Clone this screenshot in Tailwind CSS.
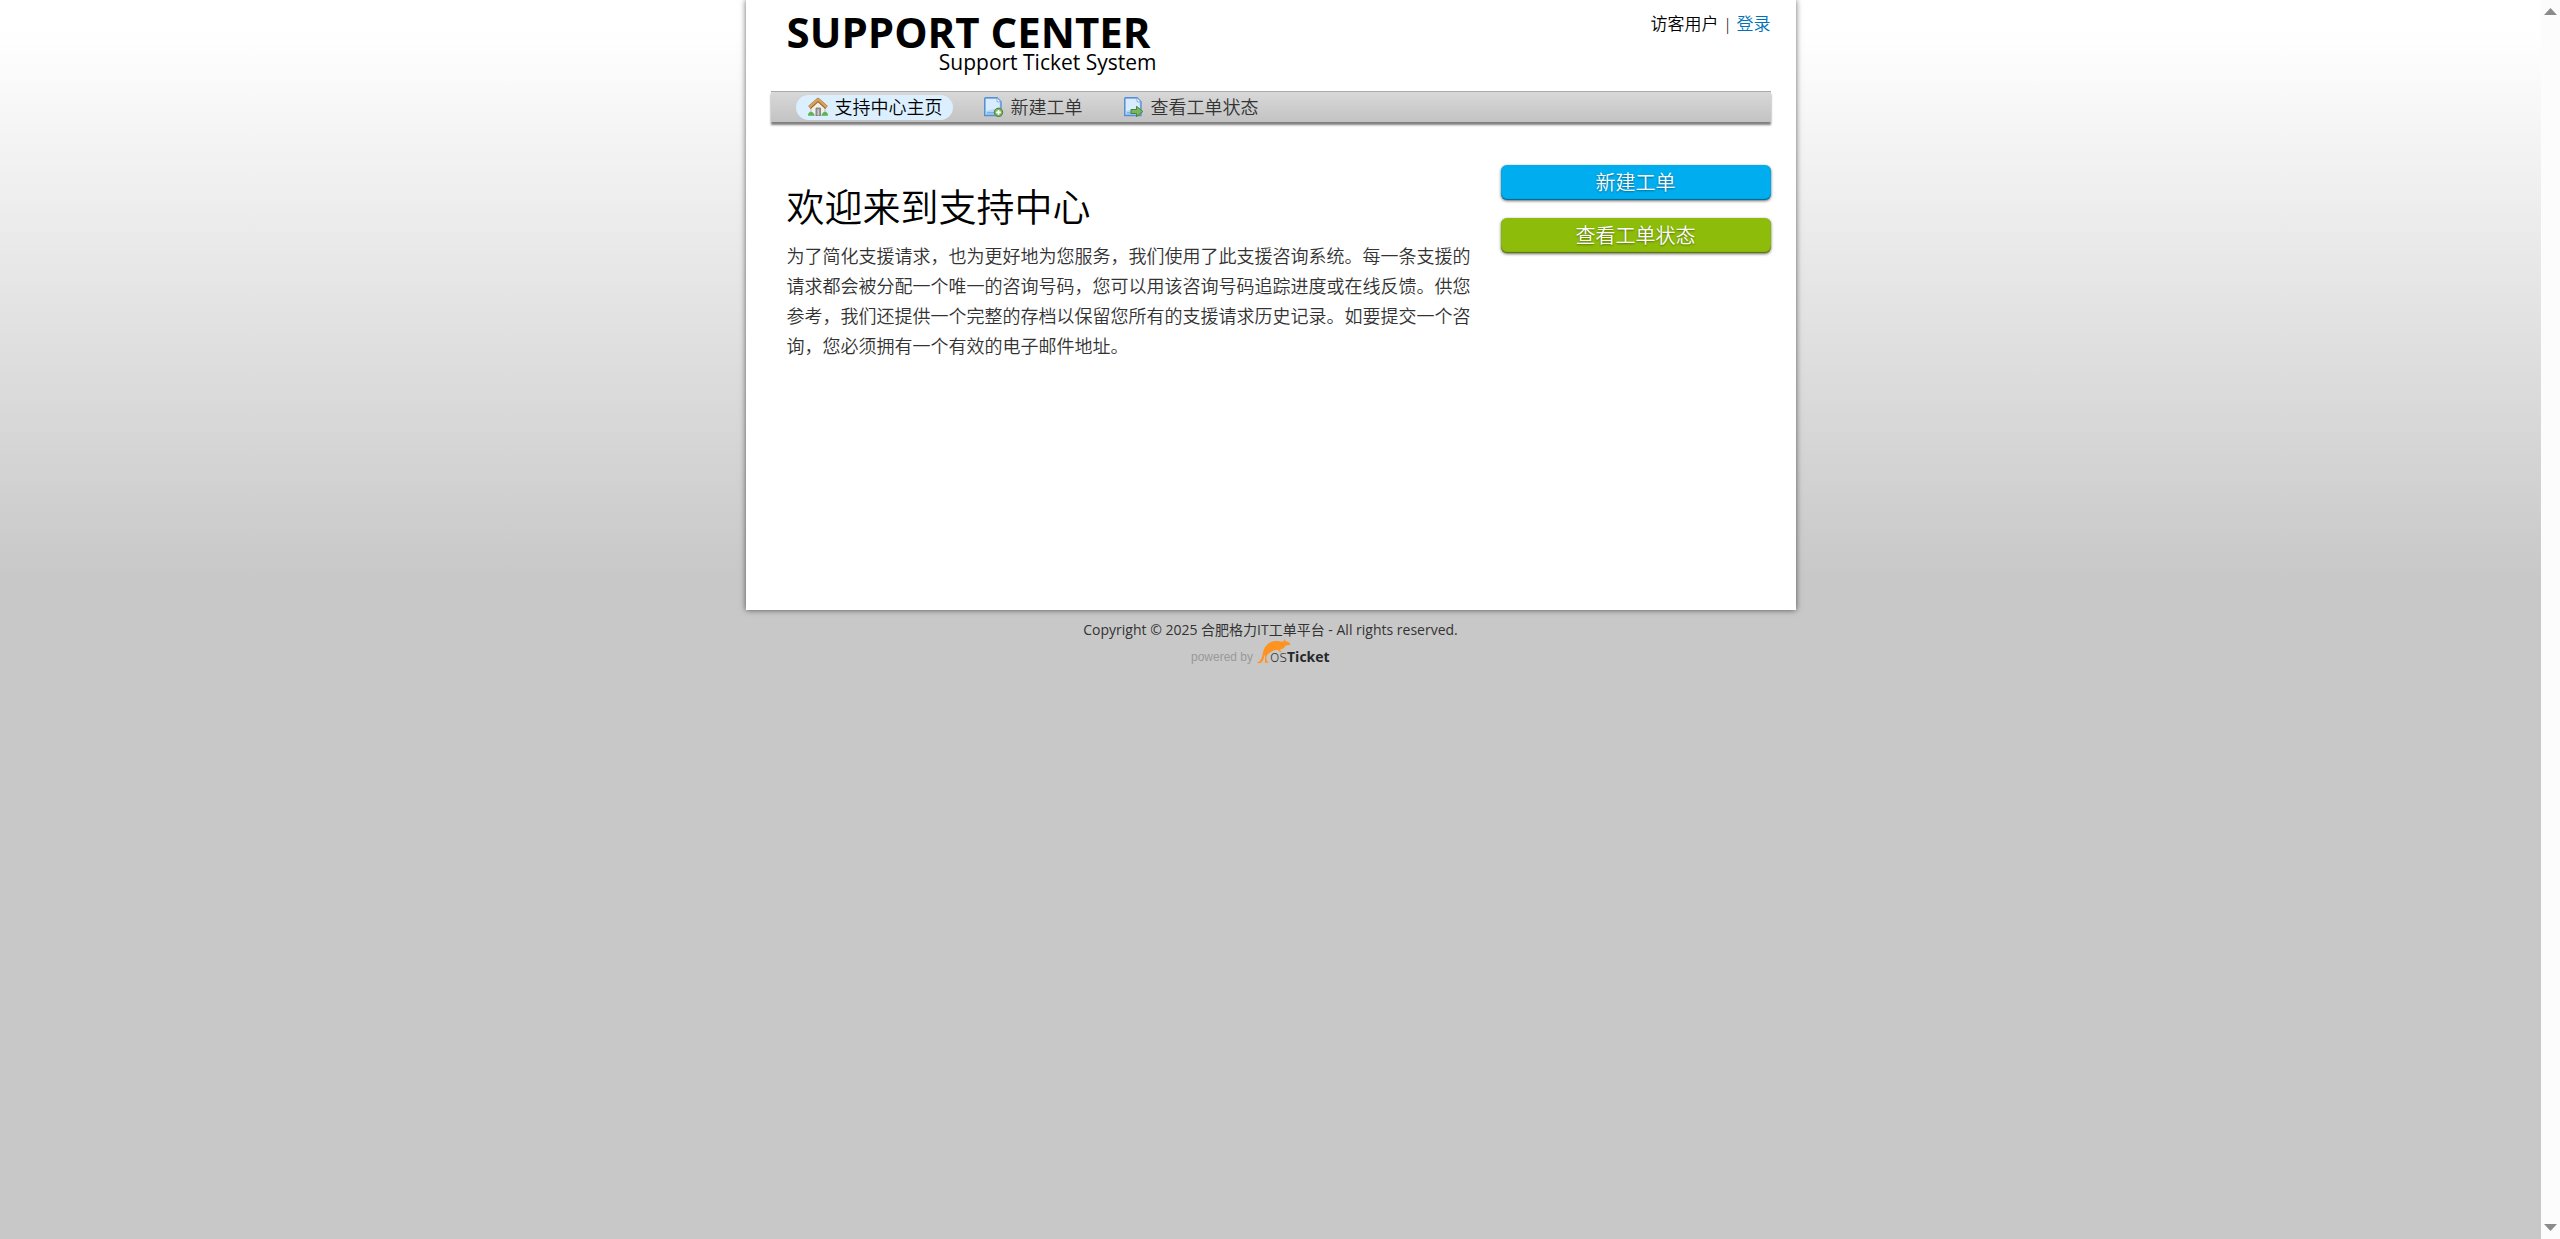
<!DOCTYPE html>
<html lang="zh-CN">
<head>
<meta charset="utf-8">
<title>SUPPORT CENTER</title>
<script src="https://cdn.jsdelivr.net/npm/@tailwindcss/browser@4"></script>
</head>
<body class="flex min-h-screen bg-[#c8c8c8] font-['Open_Sans','Noto_Sans_CJK_SC',sans-serif] text-lg text-black">
<div class="flex flex-1 flex-col items-center bg-[linear-gradient(to_bottom,#ffffff_30px,#c8c8c8_580px)]">
  <div class="flex min-h-[610px] w-full max-w-[1050px] flex-col bg-white px-[25px] shadow-[0_0_6px_rgba(0,0,0,0.6)]">
    <header class="flex h-[91px] items-start justify-between pl-4">
      <a href="#" class="flex w-[370px] flex-col pt-3">
        <span class="text-[42px] leading-[40px] font-bold">SUPPORT CENTER</span>
        <span class="text-right text-[21px] leading-[20px]">Support Ticket System</span>
      </a>
      <p class="pt-2.5 text-[17px] leading-7 font-[350]">访客用户 | <a href="#" class="text-[#0072bc]">登录</a></p>
    </header>

    <nav class="flex h-[31px] items-center gap-[19px] border-t border-[#aaa] bg-linear-to-b from-[#d8d8d8] to-[#c3c3c3] px-[25px] font-[350] text-[#333] shadow-[0_3px_2px_rgba(0,0,0,0.5)]">
      <a href="#" class="flex h-[25px] items-center gap-[7px] rounded-full bg-[#dbefff] pr-2.5 pl-3 text-black">
        <svg class="size-5" viewBox="0 0 20 20" aria-hidden="true">
          <path d="M3 9l7-6 7 6v9H3z" fill="#f1efea" stroke="#b9b4aa" stroke-width=".8"/>
          <path d="M8 11h4.500v7.500H8z" fill="#9b9b9b" stroke="#777" stroke-width=".8"/>
          <path d="M9.500 12.500h1.500v6H9.500z" fill="#c9c9c9"/>
          <path d="M0 18.800c0-3 1.500-4 3-4s3 1.300 3.500 4zM13.500 18.800c.5-2.500 2-4 3.500-4s3 1 3 4z" fill="#5fb257"/>
          <path d="M1.500 10.500L10 2.800l8.500 7.700" fill="none" stroke="#99652b" stroke-width="3.800" stroke-linejoin="round"/>
          <path d="M1.500 10L10 2.400l8.500 7.600" fill="none" stroke="#d9a25a" stroke-width="2.400" stroke-linejoin="round"/>
        </svg>
        支持中心主页
      </a>
      <a href="#" class="flex h-[25px] items-center gap-[7px] pr-2.5 pl-3">
        <svg class="size-5" viewBox="0 0 20 20" aria-hidden="true">
          <path d="M1.500.7h11.500l4 4v13.800H.7V1.500z" fill="#b4d6f8" stroke="#5590d0" stroke-width="1.400"/>
          <path d="M2 2h10.500L15.500 5.500v6C10 12 6 13 2 14z" fill="#d9ecff"/>
          <path d="M13 .8v4h4z" fill="#f4faff" stroke="#6fa3da" stroke-width=".8"/>
          <path d="M3 15.500h8M3 17h8" stroke="#7fb2e6"/>
          <circle cx="14.500" cy="15.300" r="4.200" fill="#7fb35c" stroke="#4b8238"/>
          <path d="M14.500 12.900v4.800M12.100 15.300h4.800" stroke="#fff" stroke-width="1.800"/>
        </svg>
        新建工单
      </a>
      <a href="#" class="flex h-[25px] items-center gap-[7px] pr-2.5 pl-3">
        <svg class="size-5" viewBox="0 0 20 20" aria-hidden="true">
          <path d="M1.500.7h11.500l4 4v13.800H.7V1.500z" fill="#b4d6f8" stroke="#5590d0" stroke-width="1.400"/>
          <path d="M2 2h10.500L15.500 5.500v6C10 12 6 13 2 14z" fill="#d9ecff"/>
          <path d="M13 .8v4h4z" fill="#f4faff" stroke="#6fa3da" stroke-width=".8"/>
          <path d="M3 15.500h4M3 17h6" stroke="#7fb2e6"/>
          <path d="M7 12.500h5.500V9.300l6.300 5.200-6.300 5.200v-3.200H7z" fill="#79b85a" stroke="#4b8238"/>
        </svg>
        查看工单状态
      </a>
    </nav>

    <main class="flex justify-between pt-[43px] pl-4 font-[350]">
      <section class="w-[690px] pt-3.5">
        <h1 class="text-[38px] leading-[54px]">欢迎来到支持中心</h1>
        <p class="pt-2 leading-[30px] text-[#333]">为了简化支援请求，也为更好地为您服务，我们使用了此支援咨询系统。每一条支援的请求都会被分配一个唯一的咨询号码，您可以用该咨询号码追踪进度或在线反馈。供您参考，我们还提供一个完整的存档以保留您所有的支援请求历史记录。如要提交一个咨询，您必须拥有一个有效的电子邮件地址。</p>
      </section>
      <div class="flex w-[270px] flex-col gap-[18px] text-center text-xl leading-[35px] text-white text-shadow-[0_1px_2px_rgba(0,0,0,0.4)]">
        <a href="#" class="rounded-md bg-[#00aeef] shadow-[0_1px_3px_rgba(0,0,0,0.6),inset_0_-1px_1px_rgba(0,0,0,0.4)]">新建工单</a>
        <a href="#" class="rounded-md bg-[#8dbd0a] shadow-[0_1px_3px_rgba(0,0,0,0.6),inset_0_-1px_1px_rgba(0,0,0,0.4)]">查看工单状态</a>
      </div>
    </main>
  </div>

  <footer class="flex flex-col items-center pt-2.5 text-[14px] leading-5 text-[#333]">
    <p>Copyright © 2025 合肥格力IT工单平台 - All rights reserved.</p>
    <a href="#" class="mr-[18px] flex items-end font-['Liberation_Sans',sans-serif] text-xs leading-[18px] text-[#999]">
      <span>powered by</span>
      <svg class="ml-[3px] h-[26px] w-[76px] overflow-visible" viewBox="0 0 76 26" aria-label="osTicket">
        <path d="M1 22.500C4 22 5.500 19 6.500 15 7.500 9 9.500 4.500 15 2c3-1.200 6-1 8-.8 2 .2 3 .6 4.500.3L28.300-1l1.500 2.200L32 1.800l2.300 2-.3 1.200-4.500.6C28.500 8 27 9 25 9.200l-1 .8 1.300 2-.9.500-2.800-2.700C19 10 17 10.500 15 12c-2.500 1.500-4 2.500-4.500 4.500-.3 2 0 4 .8 5l1.700 1.300h-4V16l-.5-1C8 19 6.500 21.500 5 22.800c-1.500.7-3 .5-4-.3z" fill="#ff9320"/>
        <text x="14" y="22" font-family="Open Sans" font-size="16" font-weight="300" fill="#333">os</text>
        <text x="31" y="22" font-family="Open Sans" font-size="14" font-weight="700" fill="#26282b">Ticket</text>
      </svg>
    </a>
  </footer>
</div>

<div class="flex w-[19px] flex-col items-center justify-between bg-[#fcfcfc] py-2" aria-hidden="true">
  <svg class="h-[7px] w-[13px]" viewBox="0 0 13 7"><path d="M6.500 0L13 7H0z" fill="#8b8b8b"/></svg>
  <svg class="h-[7px] w-[13px]" viewBox="0 0 13 7"><path d="M6.500 7L13 0H0z" fill="#8b8b8b"/></svg>
</div>
</body>
</html>
